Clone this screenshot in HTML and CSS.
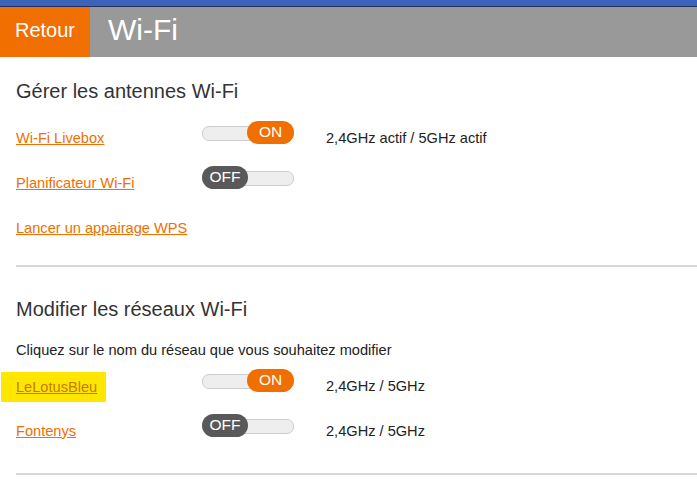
FILE: index.html
```html
<!DOCTYPE html>
<html lang="fr">
<head>
<meta charset="utf-8">
<title>Wi-Fi</title>
<link rel="stylesheet" href="styles.css">
</head>
<body>
<div class="topbar"></div>
<header class="header">
  <a class="back" href="#">Retour</a>
  <h1 class="title">Wi-Fi</h1>
</header>
<main class="content">
  <section class="section first">
    <h2 class="heading">Gérer les antennes Wi-Fi</h2>
    <div class="row">
      <a class="link" href="#">Wi-Fi Livebox</a>
      <div class="toggle on"><span class="knob">ON</span></div>
      <span class="status">2,4GHz actif / 5GHz actif</span>
    </div>
    <div class="row">
      <a class="link" href="#">Planificateur Wi-Fi</a>
      <div class="toggle off"><span class="knob">OFF</span></div>
    </div>
    <div class="row">
      <a class="link" href="#">Lancer un appairage WPS</a>
    </div>
  </section>
  <hr class="sep sep-first">
  <section class="section second">
    <h2 class="heading">Modifier les réseaux Wi-Fi</h2>
    <p class="hint">Cliquez sur le nom du réseau que vous souhaitez modifier</p>
    <div class="row">
      <div class="cell"><a class="highlight" href="#">LeLotusBleu</a></div>
      <div class="toggle on"><span class="knob">ON</span></div>
      <span class="status">2,4GHz / 5GHz</span>
    </div>
    <div class="row">
      <a class="link" href="#">Fontenys</a>
      <div class="toggle off"><span class="knob">OFF</span></div>
      <span class="status">2,4GHz / 5GHz</span>
    </div>
  </section>
  <hr class="sep sep-second">
</main>
</body>
</html>
```
FILE: styles.css
```css
* { box-sizing: border-box; }
html, body { margin: 0; padding: 0; background: #fff; }
body {
  font-family: "Liberation Sans", Arial, sans-serif;
  color: #333;
  overflow: hidden;
}
.topbar {
  height: 7px;
  background: #3d63b9;
  border-bottom: 1px solid #1e2f63;
}
.header {
  display: flex;
  align-items: stretch;
  height: 50px;
  background: #999;
}
.back {
  display: flex;
  align-items: center;
  width: 90px;
  padding: 0 0 4px 15px;
  background: #f16e00;
  color: #fff;
  font-size: 20px;
  text-decoration: none;
}
.title {
  display: flex;
  align-items: center;
  margin: 0 0 0 18px;
  padding-bottom: 4px;
  font-size: 30px;
  font-weight: normal;
  color: #fff;
}
.content { padding-left: 16px; }
.section { display: flex; flex-direction: column; }
.heading {
  margin: 0;
  font-size: 20px;
  line-height: 24px;
  font-weight: normal;
  color: #333;
}
.first .heading { margin-top: 22px; margin-bottom: 12px; }
.second .heading { margin-top: 30px; }
.hint {
  margin: 21px 0 5px;
  font-size: 14.6px;
  line-height: 16px;
  color: #222;
}
.row {
  display: flex;
  align-items: center;
  height: 45px;
}
.link {
  flex: 0 0 186px;
  font-size: 14.6px;
  line-height: 16px;
  color: #f16e00;
  text-decoration: underline;
}
.cell { display: flex; flex: 0 0 186px; }
.highlight {
  flex: 0 0 105px;
  margin: 3px 0 0 -15px;
  padding: 0 0 0 15px;
  font-size: 14.6px;
  line-height: 30px;
  background: #ffe600;
  color: #c47c00;
  text-decoration: underline;
}
.toggle {
  position: relative;
  display: flex;
  flex: 0 0 92px;
  height: 23px;
  margin-bottom: 11px;
}
.toggle::before {
  content: "";
  position: absolute;
  left: 0;
  right: 0;
  top: 5px;
  height: 13px;
  background: #eee;
  border: 1px solid #cdcdcd;
  border-radius: 7px;
}
.toggle.on { justify-content: flex-end; }
.knob {
  position: relative;
  display: flex;
  align-items: center;
  justify-content: center;
  width: 47px;
  height: 23px;
  border-radius: 12px;
  font-size: 15.5px;
  color: #fff;
}
.on .knob { background: #f16e00; }
.off .knob { width: 46px; background: #595959; }
.status {
  margin-left: 32px;
  font-size: 14.6px;
  color: #222;
}
.sep {
  margin: 0;
  height: 0;
  border: 0;
  border-top: 2px solid #d6d6d6;
}
.sep-first { margin-top: 15px; }
.sep-second { margin-top: 20px; }
```
